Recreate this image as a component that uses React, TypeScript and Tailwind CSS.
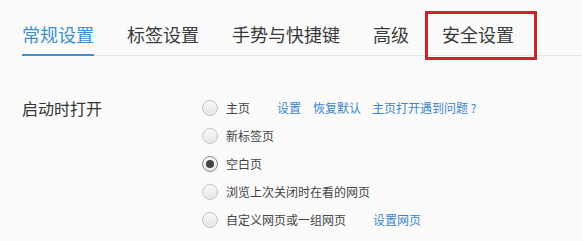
import React from "react";

const tabs = ["常规设置", "标签设置", "手势与快捷键", "高级", "安全设置"];

const Radio: React.FC<{ checked?: boolean }> = ({ checked }) => (
  <span
    className={`flex h-[16px] w-[16px] shrink-0 items-center justify-center rounded-full border bg-gradient-to-b from-[#f7f7f7] to-[#e6e6e6] ${
      checked ? "border-[#8a8a8a]" : "border-[#c4c4c4]"
    }`}
  >
    {checked && <span className="h-[8px] w-[8px] rounded-full bg-[#444]" />}
  </span>
);

interface OptionRowProps {
  label: string;
  checked?: boolean;
  children?: React.ReactNode;
}

const OptionRow: React.FC<OptionRowProps> = ({ label, checked, children }) => (
  <div className="flex h-[28px] items-center">
    <Radio checked={checked} />
    <span className="ml-[8px] text-[12px] text-[#444]">{label}</span>
    {children}
  </div>
);

export default function App() {
  return (
    <div
      className="relative h-[241px] w-[582px] overflow-hidden bg-[#fafafa]"
      style={{ fontFamily: '"Noto Sans CJK SC", "Noto Sans", sans-serif' }}
    >
      <div className="ml-[22px] flex gap-[33px] border-b border-[#e6e6e6] pt-[22px]">
        {tabs.map((t, i) => (
          <div
            key={t}
            className={`-mb-px pb-[8px] text-[18px] leading-[24px] ${
              i === 0
                ? "border-b-2 border-[#3d8fd6] text-[#3d8fd6]"
                : "border-b-2 border-transparent text-[#3a3a3a]"
            }`}
          >
            {t}
          </div>
        ))}
      </div>

      {/* red annotation box */}
      <div className="absolute left-[425px] top-[11px] h-[49px] w-[112px] border-[3px] border-[#c9232d]" />

      <div className="flex pt-[38px]">
        <div className="ml-[22px] w-[180px] pt-[4px] text-[16px] leading-[20px] text-[#333]">
          启动时打开
        </div>
        <div className="flex flex-col">
          <OptionRow label="主页">
            <span className="ml-[27px] text-[12px] text-[#3a85d0]">设置</span>
            <span className="ml-[12px] text-[12px] text-[#3a85d0]">恢复默认</span>
            <span className="ml-[11px] text-[12px] text-[#3a85d0]">主页打开遇到问题 ?</span>
          </OptionRow>
          <OptionRow label="新标签页" />
          <OptionRow label="空白页" checked />
          <OptionRow label="浏览上次关闭时在看的网页" />
          <OptionRow label="自定义网页或一组网页">
            <span className="ml-[27px] text-[12px] text-[#3a85d0]">设置网页</span>
          </OptionRow>
        </div>
      </div>
    </div>
  );
}
